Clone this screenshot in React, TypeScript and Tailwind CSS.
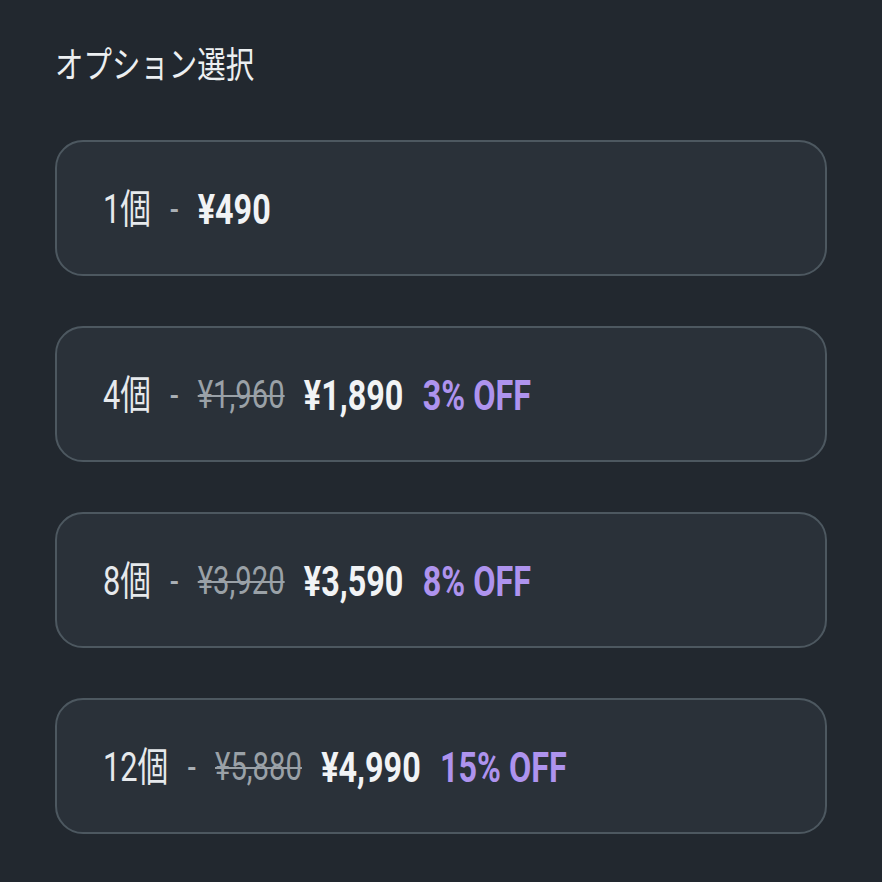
const options = [
  { qty: "1個", was: null, price: "¥490", off: null },
  { qty: "4個", was: "¥1,960", price: "¥1,890", off: "3% OFF" },
  { qty: "8個", was: "¥3,920", price: "¥3,590", off: "8% OFF" },
  { qty: "12個", was: "¥5,880", price: "¥4,990", off: "15% OFF" },
];

// the screenshot's text is horizontally condensed, so rows are drawn wide and squeezed
export default function App() {
  return (
    <div
      className="min-h-screen bg-[#22282f] px-[55px] pt-[44px] text-[#eceff1]"
      style={{ fontFamily: 'Roboto, "Noto Sans CJK JP", sans-serif' }}
    >
      <h1 className="origin-left scale-x-[0.79] whitespace-nowrap text-[36px] leading-[44px] font-normal">
        オプション選択
      </h1>

      <div className="mt-[52px] flex flex-col gap-[50px]">
        {options.map((o) => (
          <div
            key={o.qty}
            className="flex h-[136px] items-center rounded-[28px] border-2 border-[#4d5860] bg-[#2a3139] pl-[46px]"
          >
            <div className="flex origin-left scale-x-[0.77] items-center gap-[25px] whitespace-nowrap pt-[3px]">
              <span className="text-[40px] font-normal text-[#e6e9ec]">{o.qty}</span>
              <span className="text-[38px] font-normal text-[#aab0b6]">-</span>
              {o.was && (
                <span className="text-[38px] font-normal text-[#9aa1a7] line-through decoration-[2px]">{o.was}</span>
              )}
              <span className="text-[42px] font-bold text-[#f1f3f5]">{o.price}</span>
              {o.off && (
                <span className="text-[42px] font-bold text-[#ae93ee]">{o.off}</span>
              )}
            </div>
          </div>
        ))}
      </div>
    </div>
  );
}
